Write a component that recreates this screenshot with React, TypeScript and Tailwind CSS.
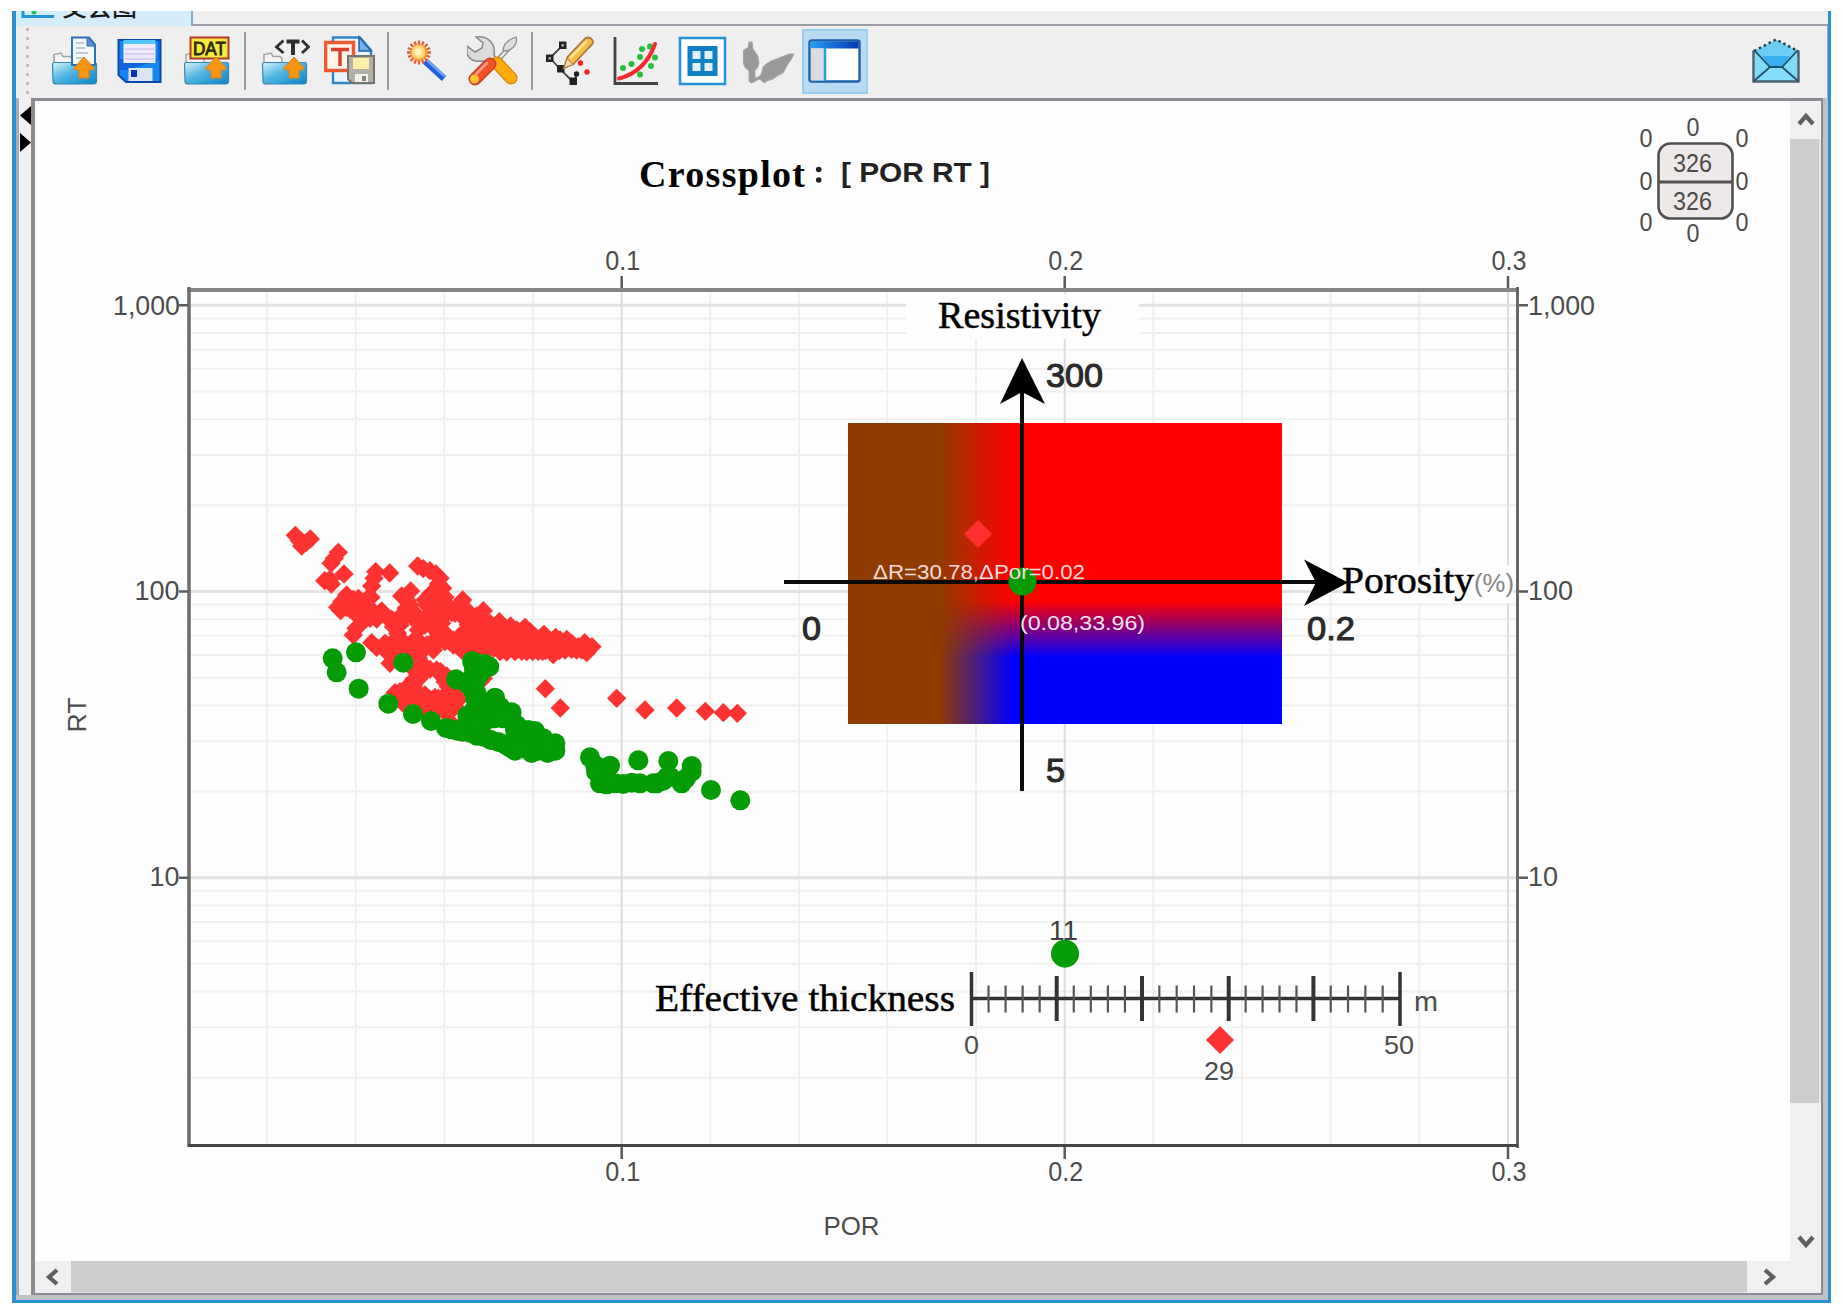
import React from "react";

const SANS = '"Liberation Sans", Arial, sans-serif';
const SERIF = '"Liberation Serif", "Times New Roman", serif';

/* ---------- toolbar icons ---------- */

function Icon({ children }: { children: React.ReactNode }) {
  return (
    <svg width="52" height="52" viewBox="0 0 52 52" className="block shrink-0">
      {children}
    </svg>
  );
}

function Folder() {
  return (
    <g>
      <path d="M6 31V19.500L13 18l2 3.500h7l2 2V31z" fill="#f4f4f4" stroke="#a3a3a3" strokeWidth="1.500" />
      <path d="M4.500 29.500q0-2 2-2h40q2 0 2 2V46q0 3-3 3H8q-3 0-3-3z" fill="url(#folderBlue)" stroke="#3a86b0" strokeWidth="1.200" />
    </g>
  );
}

function UpArrow() {
  return <path d="M36 22L46.500 33.500q-1 2-5.500 1.500V43H31V35q-4.500.500-5.500-1.500z" fill="#fb9410" stroke="#d98418" strokeWidth="1" />;
}

function OpenIcon() {
  return (
    <Icon>
      <Folder />
      <path d="M24 2.500h17l6 7V30H24z" fill="#f3f8fd" stroke="#2f6fb5" strokeWidth="2" />
      <path d="M39 2v9h8z" fill="#5b93cf" stroke="#2f6fb5" strokeWidth="1" />
      <path d="M28 8h8M28 13h9M28 18h12M28 23h8" stroke="#c3c9cf" strokeWidth="2" />
      <UpArrow />
    </Icon>
  );
}

function SaveIcon() {
  return (
    <Icon>
      <path d="M4.500 5h42v42H12l-7.500-7z" fill="#1686f2" stroke="#0a48a8" strokeWidth="2" />
      <path d="M6 24h40v-18l-2-1v20l-30 10H6z" fill="#0f63dc" />
      <rect x="9.500" y="8" width="32" height="20" fill="#eeeaff" />
      <rect x="9.500" y="5" width="32" height="4" fill="#55c8fa" />
      <path d="M11 14h29M11 19h29M11 24h29" stroke="#cfc8f4" strokeWidth="1.500" />
      <rect x="14.500" y="33" width="24" height="13" fill="#dbe4f5" />
      <rect x="17" y="35" width="6" height="7" fill="#0a35b0" />
    </Icon>
  );
}

function DatIcon() {
  return (
    <Icon>
      <Folder />
      <rect x="10.500" y="2.500" width="38" height="21" fill="#f6ea3c" stroke="#b23a2c" strokeWidth="2" />
      <text x="13" y="19.500" fontSize="19" fontWeight="400" fontFamily={SANS} fill="#2b2b10" stroke="#2b2b10" strokeWidth=".9" textLength="33" lengthAdjust="spacingAndGlyphs">DAT</text>
      <UpArrow />
    </Icon>
  );
}

function TemplateOpenIcon() {
  return (
    <Icon>
      <Folder />
      <path d="M25.500 5.500L18.500 12l7 6M44 5.500l6.500 6.500L44 18" fill="none" stroke="#2f2f2f" strokeWidth="2.800" />
      <path d="M28.500 6.500h13M35 6v14" stroke="#2f2f2f" strokeWidth="4" />
      <UpArrow />
    </Icon>
  );
}

function TemplateSaveIcon() {
  return (
    <Icon>
      <path d="M9 2.500h27l11 13V48H9z" fill="#eaf4fd" stroke="#2c86c9" strokeWidth="2.400" />
      <path d="M35 2v14h12z" fill="#6fb2e6" stroke="#2563ae" strokeWidth="1.500" />
      <rect x="1.500" y="7.500" width="28" height="28" fill="#fff3ec" stroke="#ee5a30" strokeWidth="3.500" />
      <path d="M7 14.500h18M16 14v17" stroke="#d8402a" strokeWidth="3.500" />
      <path d="M24 21h26v27H28l-4-4z" fill="#b3b0a8" stroke="#77746c" strokeWidth="2" />
      <rect x="29" y="23" width="16" height="11" fill="#fdf0a4" />
      <rect x="31" y="39" width="13" height="8" fill="#f2f2ee" />
      <rect x="38" y="41" width="4" height="5" fill="#87857e" />
    </Icon>
  );
}

function WandIcon() {
  return (
    <Icon>
      <path d="M24 26L43 43.500" stroke="#1f5fe0" strokeWidth="6.500" />
      <path d="M25.500 25L44 41.500" stroke="#6da2f2" strokeWidth="2.500" />
      <g stroke="#dd6036" strokeWidth="2.300">
        <path d="M18 5.500V29.500M6 17.500H30M9.500 9L26.500 26M26.500 9L9.500 26M13.500 6.500L22.500 28.500M22.500 6.500L13.500 28.500M7 13L29 22M29 13L7 22" />
      </g>
      <circle cx="18" cy="17.500" r="8.500" fill="#f5a03c" />
      <circle cx="17.500" cy="17" r="6.800" fill="#ffd978" />
      <circle cx="17" cy="17" r="3.500" fill="#fff3c0" />
    </Icon>
  );
}

function ToolsIcon() {
  return (
    <Icon>
      <path d="M29 27L42 13" stroke="#8d8d8d" strokeWidth="5" />
      <path d="M29 27L42 13" stroke="#e9e9e9" strokeWidth="2.500" />
      <path d="M36 15q1-9 13-13 1 3 0 6-3 7-10 8z" fill="#dedede" stroke="#8d8d8d" strokeWidth="1.300" />
      <path d="M9 2q12-2 17 8 2 5 1 10l3 5-6 6-7-5Q4 28 0 19l0-8 8 6 7-4 1-5z" fill="#dcdcdc" stroke="#8a8a8a" strokeWidth="1.500" />
      <path d="M30 28L44 43" stroke="#d98a00" strokeWidth="13" strokeLinecap="round" />
      <path d="M30 28L44 43" stroke="#ffab0e" strokeWidth="10.500" strokeLinecap="round" />
      <path d="M23 29L8 44" stroke="#c8402a" strokeWidth="13" strokeLinecap="round" />
      <path d="M23 29L10 42" stroke="#f4502a" strokeWidth="10" strokeLinecap="round" />
      <path d="M20 28L9 39" stroke="#ffa185" strokeWidth="2.500" strokeLinecap="round" />
      <circle cx="7.500" cy="44" r="4.500" fill="#ffc52e" />
    </Icon>
  );
}

function EditNodesIcon() {
  return (
    <Icon>
      <path d="M17 11L5 23l11 12 12 12 4-7" fill="none" stroke="#444" strokeWidth="1.800" />
      <g fill="#222">
        <rect x="14" y="6.500" width="7.500" height="7.500" />
        <rect x="1" y="19.500" width="7.500" height="7.500" />
        <rect x="12" y="30" width="7.500" height="7.500" />
        <rect x="24.500" y="42.500" width="7.500" height="7.500" />
        <circle cx="31.500" cy="39" r="2.700" />
      </g>
      <rect x="3.500" y="22" width="2.500" height="2.500" fill="#aaa" />
      <rect x="16.500" y="9" width="2.500" height="2.500" fill="#aaa" />
      <path d="M19 33l3.500-11L40 3.500q4-2.500 7 1 2 3 0 5L28.500 29z" fill="#f5bd45" stroke="#b07a3c" strokeWidth="1.800" />
      <path d="M25 23L42 6" stroke="#ffe493" strokeWidth="2.500" />
      <path d="M19 33l3-9.500 6 6z" fill="#f6d9b0" stroke="#b07a3c" strokeWidth="1" />
      <circle cx="35.500" cy="28" r="2.700" fill="#f02020" />
      <circle cx="42" cy="37" r="2.700" fill="#f02020" />
    </Icon>
  );
}

function CurveIcon() {
  return (
    <Icon>
      <path d="M4 2V48.500H47" fill="none" stroke="#444" strokeWidth="2.800" />
      <g fill="#26c03a">
        <circle cx="12" cy="33" r="3" />
        <circle cx="20.500" cy="29" r="3" />
        <circle cx="29" cy="22" r="3" />
        <circle cx="31" cy="14" r="3" />
        <circle cx="39" cy="11.500" r="3" />
        <circle cx="44" cy="22.500" r="3" />
        <circle cx="40" cy="31" r="3" />
        <circle cx="29" cy="39.500" r="3" />
      </g>
      <path d="M8 43.500Q34 37 44 9" fill="none" stroke="#f52a2e" strokeWidth="4" strokeLinecap="round" />
    </Icon>
  );
}

function GridIcon() {
  return (
    <Icon>
      <rect x="3" y="3" width="45" height="46" fill="#fff" stroke="#2293d6" strokeWidth="2.500" />
      <rect x="10.500" y="11" width="30" height="30" fill="#0f7fc6" />
      <g fill="#dff1fb">
        <rect x="15.500" y="16" width="8" height="8" />
        <rect x="27.500" y="16" width="8" height="8" />
        <rect x="15.500" y="28" width="8" height="8" />
        <rect x="27.500" y="28" width="8" height="8" />
      </g>
    </Icon>
  );
}

function LeafIcon() {
  return (
    <Icon>
      <path
        d="M6 7l3 0 1 7q6 6 6 14-1 6-4 7v8q6-1 7-6 0-6 4-8l5-3 13-5q5-3 10-2-2 5-6 10l-5 9-6 3-4 3-6 2-3 2-3-3q-3-2-5 1l-5 2-2-2V36Q1 33 0 27V16q3-3 5-3z"
        fill="#999" stroke="#a9a9a9" strokeWidth="1"
      />
    </Icon>
  );
}

function PanelIcon() {
  return (
    <svg width="54" height="48" viewBox="0 0 54 48" className="block shrink-0">
      <rect x="1.500" y="3.500" width="50" height="41" rx="2" fill="#fff" stroke="#1f5fa8" strokeWidth="2.400" />
      <rect x="2.500" y="4.500" width="48" height="7" fill="url(#panelBar)" />
      <rect x="3" y="11.500" width="13" height="32" fill="#d9dbde" />
      <path d="M17 11v33" stroke="#23a2dd" strokeWidth="2.500" />
    </svg>
  );
}

function MailIcon() {
  return (
    <svg width="50" height="48" viewBox="0 0 50 48" className="block shrink-0">
      <path d="M3 14L25 3l22 11v31H3z" fill="#7fdcf8" />
      <path d="M3 14L25 3l22 11-14 15H18z" fill="#6dcdf7" />
      <path d="M11 19h28L31 29H19z" fill="#3aaef2" />
      <path d="M3 44L18 30h14l15 14z" fill="#84dffa" />
      <path d="M2.500 13.500V44.500h45V13.500" fill="none" stroke="#4a646e" strokeWidth="2.400" />
      <path d="M3 14L25 2.500 47 14" fill="none" stroke="#24404c" strokeWidth="2.500" strokeDasharray="2.500 3" />
      <path d="M3 13l16 17h12l16-17M3 44l16-14M47 44L31 30" fill="none" stroke="#24506a" strokeWidth="1.800" />
    </svg>
  );
}

function Slot({ children, active }: { children: React.ReactNode; active?: boolean }) {
  return (
    <div
      className={
        active
          ? "flex h-[65px] w-[66px] shrink-0 items-center justify-center border-2 border-[#93d0f2] bg-[#b9daf0]"
          : "flex h-[65px] w-[66px] shrink-0 items-center justify-center"
      }
    >
      {children}
    </div>
  );
}

function Separator() {
  return (
    <div className="flex w-[11.500px] shrink-0 justify-center">
      <div className="h-[58px] w-[2px] bg-[#9b9b9b]" />
    </div>
  );
}

/* ---------- chart data, in thirds of a pixel from (270, 510) ---------- */

const RED: [number, number][] = [
  [76, 76], [95, 108], [121, 87], [88, 92], [108, 98], [205, 127], [183, 160], [193, 145], [222, 192], [164, 212], [180, 208],
  [184, 222], [317, 185], [359, 189], [305, 228], [303, 262], [312, 205], [443, 168], [460, 176], [480, 182], [498, 192], [510, 205],
  [505, 222], [518, 235], [495, 240], [482, 252], [465, 270], [485, 275], [510, 262], [500, 290], [478, 290],
  [520, 280], [524, 300], [395, 258], [422, 243], [410, 270], [408, 295], [230, 255], [250, 268], [235, 280], [215, 275],
  [203, 292], [212, 302], [240, 298], [272, 278], [290, 268], [290, 285], [285, 305], [265, 312], [335, 303], [345, 315], [365, 328],
  [285, 327], [258, 355], [250, 375], [300, 325], [320, 327], [272, 342], [380, 345], [383, 370], [376, 392], [305, 398],
  [320, 412], [345, 412], [365, 415], [360, 460], [350, 425], [385, 425], [400, 325], [425, 320], [440, 335], [445, 360], [438, 385],
  [440, 400], [425, 440], [460, 330], [480, 325], [465, 345], [500, 315], [520, 320], [478, 405], [490, 420], [470, 405], [500, 385],
  [488, 352], [505, 372], [525, 380], [540, 395], [518, 362], [545, 308], [560, 295], [578, 270], [575, 318], [590, 300],
  [590, 330], [600, 320], [620, 318], [640, 302], [630, 330], [585, 362], [595, 345], [610, 350], [570, 380], [590, 390],
  [560, 388], [550, 405], [565, 410], [575, 420], [590, 415], [610, 400], [630, 350], [640, 390], [660, 340], [655, 400], [640, 415], [615, 420],
  [688, 335], [700, 350], [680, 360], [722, 348], [740, 360], [765, 352], [700, 380], [720, 380], [745, 385], [770, 375], [670, 385],
  [670, 415], [690, 410], [690, 425], [710, 426], [710, 400], [735, 425], [755, 424], [770, 425], [735, 405], [760, 405], [785, 400], [795, 380],
  [788, 425], [805, 424], [822, 373], [820, 395], [810, 410], [857, 382], [845, 395], [826, 422], [850, 434], [840, 420], [862, 405], [868, 422],
  [890, 388], [885, 410], [900, 405], [905, 418], [925, 410], [944, 398], [966, 410], [950, 428], [935, 420],
  [470, 475], [455, 470], [440, 488], [432, 508], [448, 505], [430, 528], [480, 478], [512, 485], [518, 500], [525, 515], [535, 530], [445, 445], [420, 460],
  [390, 545], [375, 548], [410, 545], [395, 575], [415, 570], [440, 545], [435, 575], [455, 560], [460, 585], [480, 568], [480, 590], [500, 575],
  [520, 560], [505, 590], [520, 600], [500, 605], [540, 580], [545, 560], [560, 545], [570, 550], [535, 600], [555, 590], [530, 612], [475, 605],
  [630, 515], [640, 505], [545, 640], [612, 638], [545, 535],
  [260, 290], [250, 302], [305, 300], [310, 312], [270, 325], [230, 292], [265, 265], [355, 325], [375, 335], [390, 345], [420, 285], [430, 305], [390, 320],
  [485, 305], [500, 330], [535, 305], [530, 290], [540, 292], [555, 310], [515, 340], [480, 340], [452, 345], [505, 300], [470, 285], [500, 262], [525, 262],
  [605, 370], [625, 375], [650, 370], [670, 355], [690, 395], [730, 395], [755, 370], [780, 390], [775, 410], [800, 400], [825, 405],
  [835, 390], [850, 415], [875, 400], [885, 420], [905, 400], [915, 415], [720, 410], [650, 345], [612, 335], [625, 395], [600, 415], [630, 410],
  [650, 385], [590, 375], [605, 385], [640, 365], [680, 345], [690, 370], [660, 395], [780, 365], [800, 385], [810, 385], [845, 405], [870, 390],
  [640, 335], [620, 355], [655, 415], [700, 365], [715, 365], [730, 370], [785, 415], [818, 424], [920, 420], [950, 412], [940, 408],
  [450, 490], [425, 520], [410, 532], [420, 585], [440, 590], [470, 575], [490, 598], [520, 580], [540, 548], [528, 572], [555, 570], [575, 560],
  [500, 480], [530, 498], [450, 575], [405, 560], [425, 555], [465, 555], [430, 565], [495, 562], [505, 565], [545, 600], [400, 580], [455, 595],
  [400, 402], [410, 425], [375, 405], [380, 440], [400, 445], [445, 420], [455, 410], [440, 432], [435, 460], [450, 455], [370, 440], [345, 400],
  [365, 400], [395, 415], [430, 410], [395, 390], [370, 350], [500, 400], [525, 395], [538, 385], [550, 390], [460, 420], [430, 475], [440, 470],
  [826, 536], [871, 594], [1040, 565], [1125, 600], [1220, 594], [1306, 604], [1360, 608], [1402, 610],
];

const GREEN: [number, number][] = [
  [188, 445], [200, 487], [258, 427], [400, 458], [266, 536], [355, 581], [429, 612], [483, 633], [528, 654],
  [578, 665], [600, 668], [620, 677], [640, 680], [662, 690], [685, 696], [705, 703], [720, 712], [735, 722], [760, 715], [785, 729], [805, 722], [833, 729], [856, 722],
  [856, 700], [840, 705], [558, 508], [606, 453], [625, 460], [658, 470], [640, 475], [612, 478], [630, 492], [605, 505], [600, 515], [605, 535], [620, 550],
  [640, 575], [675, 563], [672, 590], [655, 610], [635, 620], [592, 617], [612, 600], [605, 630], [672, 625], [695, 610], [725, 607], [722, 630], [740, 645],
  [735, 660], [755, 660], [795, 663], [785, 675], [755, 680], [740, 690], [820, 685], [805, 685], [960, 742], [975, 765], [978, 785], [1020, 767], [990, 800], [990, 820],
  [1010, 823], [1035, 820], [1105, 751], [1085, 818], [1110, 820], [1060, 822], [1150, 820], [1160, 820], [1180, 812], [1195, 753], [1192, 800], [1235, 820],
  [1265, 768], [1265, 785], [1248, 805], [1323, 840], [1411, 871],
  [640, 595], [625, 575], [655, 585], [690, 590], [700, 625], [650, 630], [590, 640], [625, 635], [775, 660], [775, 700], [825, 712], [845, 715],
  [750, 705], [830, 698], [590, 520], [615, 520], [610, 465], [620, 475], [645, 462], [615, 565], [1003, 775], [988, 790], [1020, 818], [1200, 800], [545, 658], [562, 662],
];

const LOG_MINOR = [9, 8, 7, 6, 5, 4, 3, 2];
const DECADE = 286.2;
const DECADE_TOPS = [305.3, 591.5, 877.7];
const X_MAJOR = [621.7, 1064.7, 1508];
const X_MINOR = [267, 355.7, 444.3, 533, 710.3, 799, 887.3, 976, 1153.3, 1242, 1330.6, 1419.3];
const SCALE_MAJOR = [1056.7, 1142, 1228.7, 1313.4];
const SCALE_STOPS = [971.5, 1056.7, 1142, 1228.7, 1313.4, 1400];

type LabelProps = {
  x: number;
  y: number;
  w: number;
  size?: number;
  fill?: string;
  serif?: boolean;
  bold?: boolean;
  heavy?: boolean;
  transform?: string;
  children: string;
};

function Label({ x, y, w, size = 27.5, fill = "#4c4c4c", serif, bold, heavy, transform, children }: LabelProps) {
  return (
    <text
      x={x}
      y={y}
      fontSize={size}
      fontFamily={serif ? SERIF : SANS}
      fontWeight={bold ? 700 : 400}
      fill={fill}
      stroke={heavy || serif ? fill : "none"}
      strokeWidth={heavy ? 1.1 : serif ? 0.5 : 0}
      textLength={w}
      lengthAdjust="spacingAndGlyphs"
      transform={transform}
    >
      {children}
    </text>
  );
}

function Chart() {
  return (
    <svg width="1755" height="1160" viewBox="35 101 1755 1160" className="block shrink-0 bg-[#fefefe]">
      {/* grid */}
      <g stroke="#f0f0f0" strokeWidth="2">
        {DECADE_TOPS.map((top) =>
          LOG_MINOR.map((n) => {
            const y = top + DECADE * (1 - Math.log10(n));
            return <line key={top + "-" + n} x1="190" x2="1516" y1={y} y2={y} />;
          }),
        )}
        {X_MINOR.map((x) => (
          <line key={x} x1={x} x2={x} y1="291" y2="1144" />
        ))}
      </g>
      <g stroke="#e2e2e2" strokeWidth="3">
        {DECADE_TOPS.map((y) => (
          <line key={y} x1="190" x2="1516" y1={y} y2={y} />
        ))}
        {X_MAJOR.map((x) => (
          <line key={x} x1={x} x2={x} y1="291" y2="1144" strokeWidth="2" stroke="#dcdcdc" />
        ))}
      </g>

      {/* frame and ticks */}
      <path d="M187 290H1518" stroke="#858585" strokeWidth="4" />
      <path d="M189 287V1147" stroke="#6c6c6c" strokeWidth="3.500" />
      <path d="M1517.500 287V1148" stroke="#5f5f5f" strokeWidth="2.800" />
      <path d="M188 1145.500H1518" stroke="#464646" strokeWidth="3" />
      <g stroke="#5a5a5a" strokeWidth="2.500">
        {X_MAJOR.map((x) => (
          <path key={x} d={`M${x} 276V288M${x} 1147V1159`} />
        ))}
        {DECADE_TOPS.map((y) => (
          <path key={y} d={`M179 ${y}H188M1519 ${y}H1528`} />
        ))}
      </g>

      {/* axis labels */}
      {["0.1", "0.2", "0.3"].map((t, i) => (
        <g key={t}>
          <Label x={X_MAJOR[i] - 16.5} y={269.5} w={35}>{t}</Label>
          <Label x={X_MAJOR[i] - 16.5} y={1181} w={35}>{t}</Label>
        </g>
      ))}
      <Label x={113} y={315} w={67}>1,000</Label>
      <Label x={134.500} y={599.500} w={45}>100</Label>
      <Label x={149.500} y={886} w={30}>10</Label>
      <Label x={1528} y={315} w={67}>1,000</Label>
      <Label x={1528} y={599.500} w={45}>100</Label>
      <Label x={1528} y={886} w={30}>10</Label>
      <Label x={823.500} y={1234.500} w={56} size={26}>POR</Label>
      <Label x={0} y={0} w={35} size={26} transform="translate(86 732.5) rotate(-90)">RT</Label>

      {/* title */}
      <text x="639" y="186.500" fontSize="38" fontWeight="700" fontFamily={SERIF} fill="#000" textLength="166" lengthAdjust="spacing">Crossplot</text>
      <circle cx="818.700" cy="169.500" r="2.800" fill="#222" />
      <circle cx="818.700" cy="180" r="2.800" fill="#222" />
      <Label x={841} y={181.500} w={149} size={28.5} fill="#222" bold>[ POR RT ]</Label>

      {/* point clouds */}
      <g transform="translate(270 510) scale(.33333)">
        {RED.map(([x, y], i) => (
          <path key={i} d={`M${x} ${y - 29}l29 29l-29 29l-29-29z`} fill="#ff3232" />
        ))}
        {GREEN.map(([x, y], i) => (
          <circle key={i} cx={x} cy={y} r="30" fill="#049b04" />
        ))}
      </g>

      {/* resistivity and porosity legend */}
      <rect x="906" y="294" width="233" height="45" fill="#fefefe" />
      <rect x="848" y="423" width="434" height="301" fill="url(#legendV)" />
      <rect x="848" y="423" width="434" height="301" fill="url(#legendH)" />
      <path d="M978 520l14 14-14 14-14-14z" fill="#ff3030" />
      <path d="M784 582H1320M1022 391V791" stroke="#0a0a0a" strokeWidth="4" />
      <path d="M1022 358l23 46-23-12-22 12z" fill="#000" />
      <rect x="1350" y="565" width="163" height="38" fill="#fefefe" />
      <path d="M1348 582.500l-44 23.500 12-23.500-12-23z" fill="#000" />
      <circle cx="1022.500" cy="581.500" r="14" fill="#049b04" />
      <Label x={873} y={578.500} w={212} size={20} fill="#f3dcdc">ΔR=30.78,ΔPor=0.02</Label>
      <Label x={1020} y={629.500} w={125} size={20} fill="#f6e2f0">(0.08,33.96)</Label>
      <Label x={938} y={328} w={163} size={37} fill="#000" serif>Resistivity</Label>
      <Label x={1342} y={593} w={132} size={37} fill="#000" serif>Porosity</Label>
      <Label x={1474} y={592} w={40} size={26} fill="#858585">(%)</Label>
      <Label x={1046} y={387} w={57} size={33.5} fill="#2a2a2a" heavy>300</Label>
      <Label x={802} y={640} w={19} size={33.5} fill="#2a2a2a" heavy>0</Label>
      <Label x={1307} y={640} w={48} size={33.5} fill="#2a2a2a" heavy>0.2</Label>
      <Label x={1046} y={781.5} w={19} size={33.5} fill="#2a2a2a" heavy>5</Label>

      {/* effective thickness ruler */}
      <Label x={655} y={1010.5} w={300} size={38} fill="#000" serif>Effective thickness</Label>
      <g stroke="#333">
        <path d="M971 998.500H1401" strokeWidth="3.500" />
        <path d="M971.500 972V1026M1400 972V1026" strokeWidth="3.500" />
        {SCALE_MAJOR.map((x) => (
          <path key={x} d={`M${x} 976V1021`} strokeWidth="4" />
        ))}
        {SCALE_STOPS.slice(0, 5).map((x, i) =>
          [1, 2, 3, 4].map((k) => {
            const px = x + ((SCALE_STOPS[i + 1] - x) * k) / 5;
            return <path key={i + "-" + k} d={`M${px} 985.5V1012.5`} strokeWidth="2.200" stroke="#555" />;
          }),
        )}
      </g>
      <text x="1049" y="940" fontSize="27" fontFamily={SANS} fill="#404040" textLength="29" lengthAdjust="spacingAndGlyphs">11</text>
      <circle cx="1065" cy="953.700" r="14" fill="#049b04" />
      <path d="M1220 1026l14 14-14 14-14-14z" fill="#ff3232" />
      <Label x={964} y={1054} w={15} size={26}>0</Label>
      <Label x={1384} y={1054} w={30} size={26}>50</Label>
      <Label x={1204} y={1080} w={30} size={26}>29</Label>
      <Label x={1414} y={1010.5} w={24} size={28}>m</Label>

      {/* sample counter */}
      <rect x="1658.500" y="143.500" width="74" height="75" rx="12" fill="#efe8e8" stroke="#505050" strokeWidth="2.600" />
      <path d="M1658 182H1733" stroke="#505050" strokeWidth="3" />
      <Label x={1673} y={171.5} w={39} size={25}>326</Label>
      <Label x={1673} y={210} w={39} size={25}>326</Label>
      {[
        [1646, 147], [1693, 136], [1742, 147], [1646, 190], [1742, 190], [1646, 231], [1742, 231], [1693, 242],
      ].map(([x, y]) => (
        <Label key={x + "-" + y} x={x - 6.5} y={y} w={13} size={25}>0</Label>
      ))}
    </svg>
  );
}

function Chevron({ d }: { d: string }) {
  return (
    <svg width="20" height="20" viewBox="0 0 20 20" className="block">
      <path d={d} fill="none" stroke="#606060" strokeWidth="4.200" />
    </svg>
  );
}

function Defs() {
  return (
    <svg width="0" height="0" className="absolute">
      <defs>
        <linearGradient id="folderBlue" x1="0" y1="0" x2="1" y2="1">
          <stop offset="0" stopColor="#d8f3fd" />
          <stop offset=".45" stopColor="#4fb4e2" />
          <stop offset="1" stopColor="#0b86c4" />
        </linearGradient>
        <linearGradient id="panelBar" x1="0" y1="0" x2="1" y2="0">
          <stop offset="0" stopColor="#27a0f5" />
          <stop offset="1" stopColor="#0636b4" />
        </linearGradient>
        <linearGradient id="legendV" x1="0" y1="0" x2="0" y2="1">
          <stop offset=".59" stopColor="#ff0000" />
          <stop offset=".78" stopColor="#0000ff" />
        </linearGradient>
        <linearGradient id="legendH" x1="0" y1="0" x2="1" y2="0">
          <stop offset=".21" stopColor="#903c00" />
          <stop offset=".38" stopColor="#903c00" stopOpacity="0" />
        </linearGradient>
      </defs>
    </svg>
  );
}

export default function App() {
  return (
    <div className="h-[1315px] w-[1843px] overflow-hidden bg-white pt-[11px] pl-3">
      <Defs />
      <div className="flex h-[1292px] w-[1819px] flex-col border-r-[3px] border-b-[3px] border-l-4 border-[#2b90d4] bg-[#efefef]">
        {/* document tabs */}
        <div className="flex h-[15px] shrink-0">
          <div className="flex h-[15px] w-[177px] shrink-0 items-start overflow-hidden border-r-2 border-[#7fb0cc] bg-[#d5ecfb] pl-[5px]">
            <svg width="34" height="8" viewBox="0 0 34 8" className="block shrink-0">
              <path d="M2 0V5.500H33" fill="none" stroke="#2095d8" strokeWidth="3" />
              <circle cx="13" cy="1" r="2.500" fill="#26c060" />
            </svg>
            <div
              className="-mt-[24px] ml-[7px] text-[25px] leading-[36px] font-medium whitespace-nowrap text-[#1a1a1a]"
              style={{ fontFamily: '"Noto Sans CJK SC", sans-serif' }}
            >
              交会图
            </div>
          </div>
          <div className="grow border-b-2 border-[#9b9ea4]" />
        </div>

        {/* toolbar */}
        <div className="flex h-[72px] shrink-0 items-center border-r border-[#a5a8ae] pb-[2px]">
          <div className="flex w-[25px] shrink-0 flex-col items-center gap-[6px] pr-[3px]">
            {[0, 1, 2, 3, 4, 5, 6, 7].map((i) => (
              <div key={i} className="h-[3px] w-[3px] bg-[#bdbdbd]" />
            ))}
          </div>
          <Slot><OpenIcon /></Slot>
          <Slot><SaveIcon /></Slot>
          <Slot><DatIcon /></Slot>
          <Separator />
          <Slot><TemplateOpenIcon /></Slot>
          <Slot><TemplateSaveIcon /></Slot>
          <Separator />
          <Slot><WandIcon /></Slot>
          <Slot><ToolsIcon /></Slot>
          <Separator />
          <Slot><EditNodesIcon /></Slot>
          <Slot><CurveIcon /></Slot>
          <Slot><GridIcon /></Slot>
          <Slot><LeafIcon /></Slot>
          <Slot active><PanelIcon /></Slot>
          <div className="mr-[26px] ml-auto"><MailIcon /></div>
        </div>

        {/* body */}
        <div className="flex min-h-0 grow border-r-[5px] border-b-[5px] border-[#bfc1c8]">
          <div className="flex w-[15px] shrink-0 flex-col items-end gap-2 border-l-[3px] border-[#a9acb2] bg-[#eff0f2] pt-2">
            <svg width="11" height="19" viewBox="0 0 11 19" className="block"><path d="M11 0v19L0 9.500z" fill="#000" /></svg>
            <svg width="11" height="19" viewBox="0 0 11 19" className="block"><path d="M0 0v19L11 9.500z" fill="#000" /></svg>
          </div>
          <div className="flex grow flex-col border-t-[3px] border-r-2 border-b-2 border-l-4 border-[#8b8d92] bg-[#f0f0f0]">
            <div className="flex h-[1160px] shrink-0">
              <Chart />
              <div className="flex grow flex-col items-center">
                <div className="flex h-[38px] shrink-0 items-center"><Chevron d="M3 14l7-8 7 8" /></div>
                <div className="h-[964px] w-full shrink-0 border-r-2 border-[#e4e4e4] bg-[#cdcdcd]" />
                <div className="flex grow items-end pb-[10px]"><Chevron d="M3 6l7 8 7-8" /></div>
              </div>
            </div>
            <div className="flex min-h-0 grow">
              <div className="flex w-9 shrink-0 items-center justify-center"><Chevron d="M14 3l-8 7 8 7" /></div>
              <div className="w-[1676px] shrink-0 border-b border-[#e4e4e4] bg-[#cdcdcd]" />
              <div className="flex w-11 items-center justify-center"><Chevron d="M6 3l8 7-8 7" /></div>
            </div>
          </div>
        </div>
      </div>
    </div>
  );
}
